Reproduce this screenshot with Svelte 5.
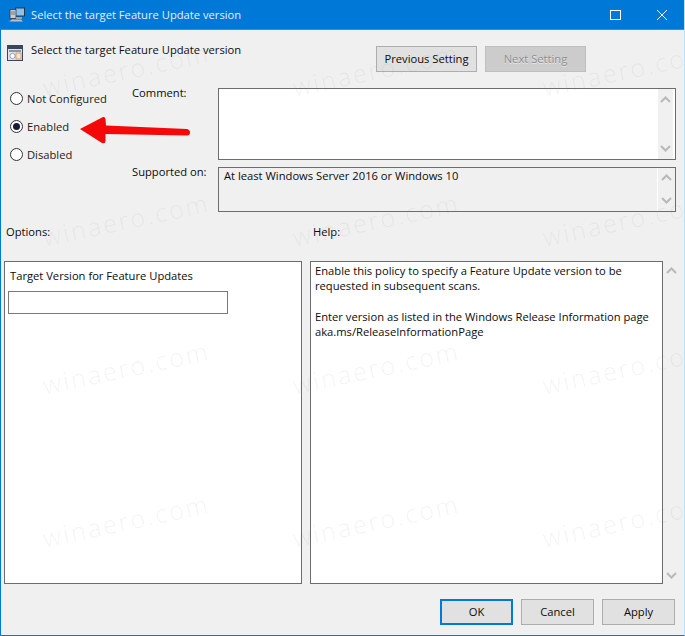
<script>
  const marks = [];
  for (const y of [72, 222, 370, 523]) for (const x of [42, 292, 542]) marks.push({ x, y });
</script>

<div class="win">
  <header class="title">
    <svg class="appicon" viewBox="0 0 16 16" width="16" height="16">
      <rect x="6" y="0.5" width="10" height="9" fill="#24364e"/><rect x="7" y="1.5" width="8" height="7" fill="#8fc0e6"/>
      <rect x="1" y="2.5" width="6" height="9" fill="#c9cdd3" stroke="#2e3a48" stroke-width=".8"/>
      <path d="M2 5h4M2 7h4" stroke="#5a6675" stroke-width=".8"/>
      <rect x="7" y="10" width="6" height="2" fill="#99a3ae"/><path d="M0 14.5l3-2h9l2 2z" fill="#b9c0c8"/>
    </svg>
    <span class="title-text">Select the target Feature Update version</span>
    <div class="wbtns">
      <svg viewBox="0 0 12 12" width="12" height="12"><rect x=".5" y="1.5" width="10" height="9" fill="none" stroke="#fff"/></svg>
      <svg viewBox="0 0 12 12" width="12" height="12"><path d="M1 1l10 10M11 1L1 11" stroke="#fff" stroke-width="1" fill="none"/></svg>
    </div>
  </header>

  <div class="body">
    <div class="head">
      <svg viewBox="0 0 16 16" width="16" height="16">
        <rect x=".5" y=".5" width="15" height="15" fill="#dfe3e8" stroke="#39475a"/>
        <rect x="1" y="1" width="14" height="3" fill="#39475a"/>
        <rect x="2" y="5" width="12" height="2" fill="#8b96a4"/>
        <circle cx="5.5" cy="11" r="2.6" fill="#fff" stroke="#76828f" stroke-width=".7"/>
        <rect x="9" y="8" width="5" height="6" fill="#f3e3d3" stroke="#b9754a" stroke-width=".6"/>
      </svg>
      <span class="head-text">Select the target Feature Update version</span>
      <div class="nav">
        <button class="btn">Previous Setting</button>
        <button class="btn off" disabled>Next Setting</button>
      </div>
    </div>

    <div class="settings">
      <div class="radios">
        <label><span class="radio"></span>Not Configured</label>
        <label><span class="radio on"></span>Enabled</label>
        <label><span class="radio"></span>Disabled</label>
      </div>
      <div class="fields">
        <span class="lbl">Comment:</span>
        <div class="box white">
          <div class="txt"></div>
          <div class="scroll inset">
            <svg viewBox="0 0 11 7" width="11" height="7"><path d="M1 6l4.5-4.5L10 6" fill="none" stroke="#bdb8b8" stroke-width="2"/></svg>
            <svg viewBox="0 0 11 7" width="11" height="7"><path d="M1 1l4.500 4.500L10 1" fill="none" stroke="#bdb8b8" stroke-width="2"/></svg>
          </div>
        </div>
        <span class="lbl">Supported on:</span>
        <div class="box">
          <div class="txt">At least Windows Server 2016 or Windows 10</div>
          <div class="scroll sep">
            <svg viewBox="0 0 11 7" width="11" height="7"><path d="M1 6l4.5-4.5L10 6" fill="none" stroke="#bdb8b8" stroke-width="2"/></svg>
            <svg viewBox="0 0 11 7" width="11" height="7"><path d="M1 1l4.500 4.500L10 1" fill="none" stroke="#bdb8b8" stroke-width="2"/></svg>
          </div>
        </div>
      </div>
    </div>

    <div class="captions"><span>Options:</span><span>Help:</span></div>

    <div class="panes">
      <div class="pane left">
        <div class="target">Target Version for Feature Updates</div>
        <div class="input"></div>
      </div>
      <div class="pane right">
        <p>Enable this policy to specify a Feature Update version to be<br>requested in subsequent scans.</p>
        <p>Enter version as listed in the Windows Release Information page<br>aka.ms/ReleaseInformationPage</p>
      </div>
      <div class="scroll outer">
        <svg viewBox="0 0 11 7" width="11" height="7"><path d="M1 6l4.500-4.500L10 6" fill="none" stroke="#bdb8b8" stroke-width="2"/></svg>
        <svg viewBox="0 0 11 7" width="11" height="7"><path d="M1 1l4.500 4.500L10 1" fill="none" stroke="#bdb8b8" stroke-width="2"/></svg>
      </div>
    </div>

    <div class="foot">
      <button class="btn act default">OK</button>
      <button class="btn act">Cancel</button>
      <button class="btn act">Apply</button>
    </div>
  </div>

  {#each marks as m}
    <span class="mark" style="left:{m.x}px;top:{m.y}px">winaero.com</span>
  {/each}

  <svg class="arrow" viewBox="0 0 120 40" width="120" height="40">
    <path d="M0 15 L23 3 Q25 2.500 25.500 5 L26 11.500 L107 15 Q110 15.500 110 18.500 Q110 21.500 107 21.500 L25.500 20 L25.500 27 Q25.500 30 22 29 Z" fill="#f40808"/>
  </svg>
</div>

<style>
  :global(body) { margin: 0; }
  .win {
    position: relative; width: 685px; height: 636px; overflow: hidden; box-sizing: border-box;
    background: #f0f0f0; font: 11.2px/16px "Open Sans", "Noto Sans", sans-serif; color: #0c0c0c;
    display: flex; flex-direction: column;
    border-style: solid; border-color: #0078d7 #b4e2f7 #0078d7 #0078d7; border-width: 0 1px 1px;
  }
  .title { height: 30px; margin: 0 -1px; background: #0078d7; display: flex; align-items: center; padding: 0 0 0 9px; flex: none; border-bottom: 1px solid #3d8fd4; box-sizing: border-box; color: #e3f0fb; }
  .appicon { flex: none; }
  .title-text { margin-left: 6px; }
  .wbtns { margin-left: auto; display: flex; gap: 34px; padding-right: 17px; align-items: center; }
  .body { flex: 1; display: flex; flex-direction: column; min-height: 0; }
  .head { display: flex; align-items: flex-start; padding: 15px 98px 0 6px; height: 58px; box-sizing: border-box; flex: none; }
  .head-text { margin-left: 8px; margin-top: -3px; }
  .nav { margin-left: auto; display: flex; gap: 8px; margin-top: 1px; }
  .btn { font: inherit; color: #0c0c0c; width: 101px; height: 26px; padding: 0; background: #e1e1e1; border: 1px solid #adadad; box-sizing: border-box; }
  .btn.off { background: #cccccc; border-color: #bfbfbf; color: #8f8f8f; text-shadow: 0 1px 0 #e8e8e8; }
  .settings { display: flex; flex: none; height: 124px; }
  .radios { width: 131px; padding: 0 0 0 9px; box-sizing: border-box; display: flex; flex-direction: column; gap: 12px; margin-top: 3px; }
  .radios label { display: flex; align-items: center; height: 16px; gap: 4px; color: #222; }
  .radio { width: 13px; height: 13px; border-radius: 50%; border: 1px solid #333; background: #fff; box-sizing: border-box; display: grid; place-items: center; position: relative; top: -1px; }
  .radio.on::after { content: ""; width: 7px; height: 7px; border-radius: 50%; background: #1a1a3a; }
  .fields { display: grid; grid-template-columns: 86px 458px; grid-template-rows: 72px 45px; row-gap: 7px; align-content: start; }
  .lbl { margin-top: -3px; }
  .box { border: 1px solid #6d6d6d; display: flex; box-sizing: border-box; min-height: 0; }
  .white { background: #fff; }
  .txt { flex: 1; padding: 0 5px; }
  .scroll { flex: none; display: flex; flex-direction: column; justify-content: space-between; align-items: center; box-sizing: border-box; }
  .scroll.inset { width: 15px; margin-right: 2px; background: #f0f0f0; padding: 7px 0; }
  .scroll.sep { width: 18px; border-left: 1px solid #fff; padding: 6px 0 7px; }
  .captions { display: grid; grid-template-columns: 307px 1fr; padding: 12px 0 0 5px; height: 49px; flex: none; box-sizing: border-box; }
  .panes { display: grid; grid-template-columns: 298px 361px 17px; height: 323px; flex: none; padding-left: 3px; }
  .pane { border: 1px solid #6d6d6d; background: #fff; box-sizing: border-box; }
  .pane.left { padding: 6px 3px; }
  .pane.right { margin-left: 8px; padding: 0 4px; line-height: 15px; }
  .pane p { margin: 1px 0 16px; }
  .target { padding: 0 2px; }
  .input { width: 220px; height: 23px; border: 1px solid #7a7a7a; box-sizing: border-box; margin-top: 7px; }
  .scroll.outer { padding: 6px 0 5px; }
  .foot { flex: 1; display: flex; justify-content: flex-end; gap: 8px; padding: 15px 9px 0 0; box-sizing: border-box; }
  .btn.act { width: 73px; }
  .default { border: 2px solid #0078d7; }
  .mark { position: absolute; font: 300 25px/30px "Open Sans", "DejaVu Sans", sans-serif; letter-spacing: 2.3px; color: rgba(130,130,130,.1); transform: rotate(-12deg); transform-origin: left center; pointer-events: none; white-space: nowrap; }
  .arrow { position: absolute; left: 79px; top: 114px; }
</style>
